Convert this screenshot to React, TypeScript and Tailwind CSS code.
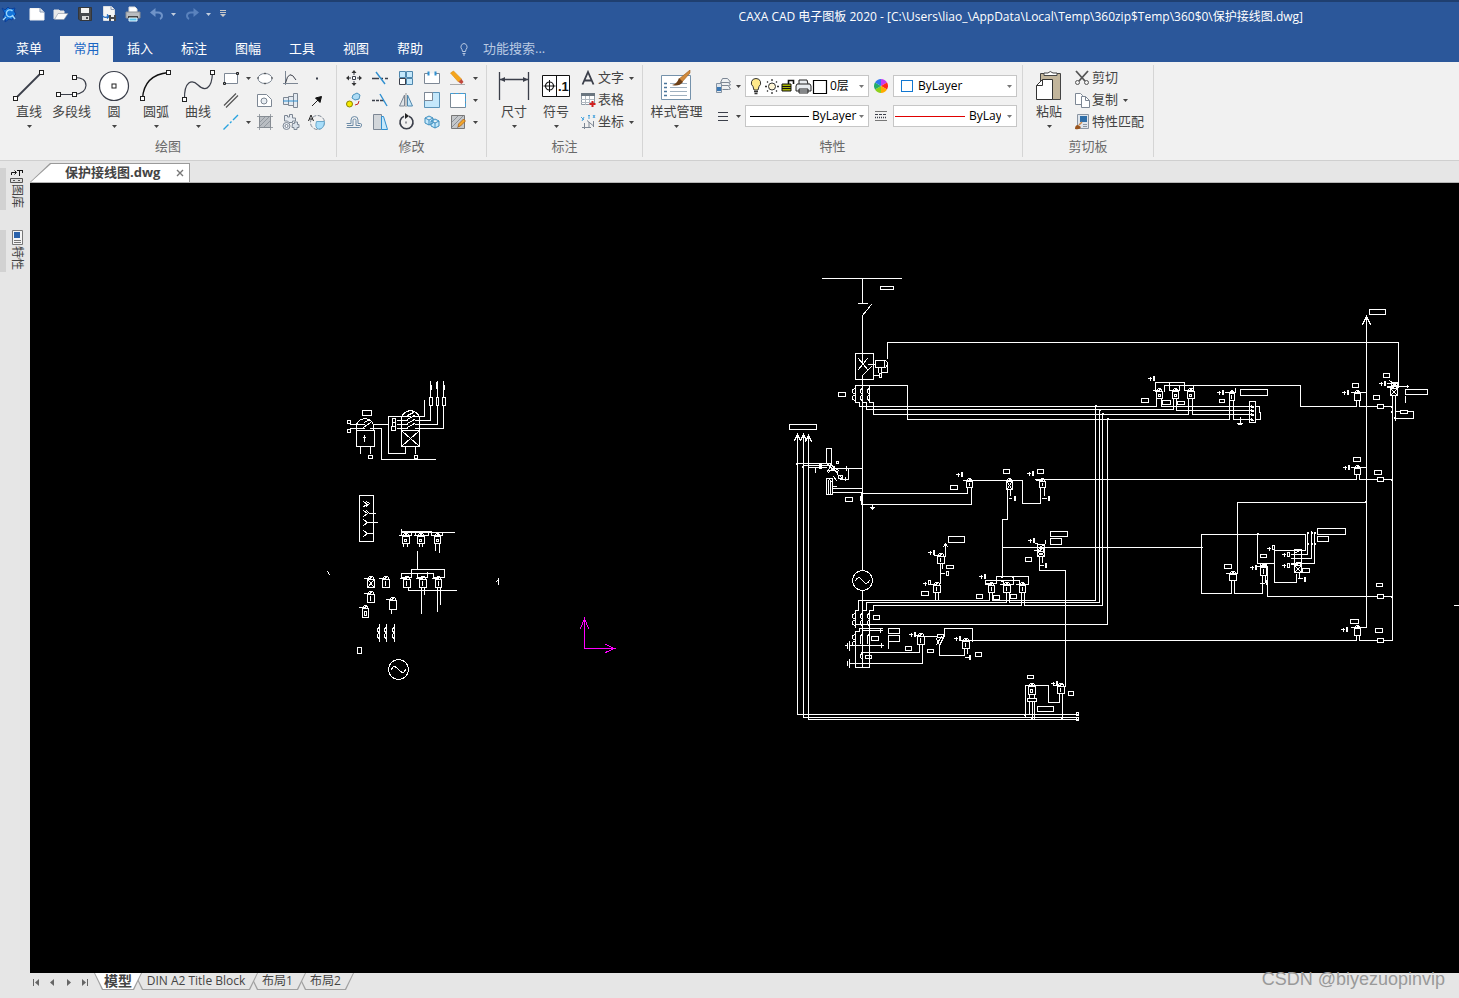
import React from "react";

const INK = "#3b3f4a";
const GREY = "#7d8794";
const SKY = "#2f8fd0";
const PALE = "#c5e8fb";

type DrawProps = { w?: number; h?: number; children: React.ReactNode };

function Draw({ w = 18, h = 18, children }: DrawProps) {
  return (
    <svg width={w} height={h} viewBox={`0 0 ${w} ${h}`} fill="none" stroke={INK} strokeWidth="1" className="block shrink-0" aria-hidden="true">
      {children}
    </svg>
  );
}

function Caret({ color = "#444444" }: { color?: string }) {
  return (
    <svg width="5" height="3" viewBox="0 0 5 3" className="block shrink-0" aria-hidden="true">
      <path d="M0 0h5L2.5 3z" fill={color} />
    </svg>
  );
}

/* ---------- quick access bar ---------- */

function QuickAccess() {
  return (
    <div className="flex h-[24px] items-center">
      <button aria-label="CAXA">
        <Draw w={18} h={18}>
          <path d="M2 3l3 2 3-3 2 2 5-1-1 3 2 3-2 2-2 4-3-1-4 3 1-4-3-1 2-3z" fill="#1273d8" stroke="#0b3f9a" />
          <path d="M12.500 6a3.500 3.500 0 1 0 .5 4M12 10l3 4M3 15l3-3" stroke="#9bd8ff" strokeWidth="1.300" />
        </Draw>
      </button>
      <button aria-label="新建" className="ml-[11px]">
        <Draw w={16} h={14}>
          <path d="M1 1.500h10l4 4V13H1z" fill="#fff" stroke="#f3f3f3" />
          <path d="M11 1v4h4" stroke="#8e9db5" fill="#dfe5ee" />
        </Draw>
      </button>
      <button aria-label="打开" className="ml-[8px]">
        <Draw w={16} h={14}>
          <path d="M1 12V3h5l1 1h4v3" fill="#e8e8e8" stroke="#e8e8e8" />
          <path d="M1.500 12.500L5 6.500h10l-4 6z" fill="#fafafa" stroke="#8a93a3" strokeWidth=".6" />
        </Draw>
      </button>
      <button aria-label="保存" className="ml-[9px]">
        <Draw w={14} h={14}>
          <path d="M.5.5h13v13H2l-1.500-1.500z" fill="#46484c" stroke="#33363b" />
          <path d="M3 1h8v5H3z" fill="#f2f2f2" stroke="none" />
          <path d="M4 9h7v4H4z" fill="#d8d8d8" stroke="none" />
          <path d="M8 10h2v2H8z" fill="#46484c" stroke="none" />
        </Draw>
      </button>
      <button aria-label="另存为" className="ml-[9px]">
        <Draw w={16} h={16}>
          <path d="M2.500.5h8l3 3v11h-11z" fill="#f5f5f5" stroke="#d9dde3" />
          <path d="M10 .5v3h3.500" stroke="#8e9db5" />
          <path d="M1 9.500q2 3 6 1M6 8.500l2 2-2 2" stroke="#1b66bd" strokeWidth="1.300" />
          <path d="M8 9h7v6H8z" fill="#46484c" stroke="none" />
          <path d="M10 9h3v2h-3zM10 13h3v2h-3z" fill="#eee" stroke="none" />
        </Draw>
      </button>
      <button aria-label="打印" className="ml-[8px]">
        <Draw w={16} h={16}>
          <path d="M4 1h6l2 2v4H4z" fill="#fff" stroke="#e0e0e0" />
          <path d="M1 6h14v6H1z" fill="#b9bcc0" stroke="#8b8f94" />
          <path d="M3 10h10v2H3z" fill="#444" stroke="none" />
          <path d="M4 12h8v3H4z" fill="#58c4ee" stroke="#e9f6fc" />
        </Draw>
      </button>
      <button aria-label="撤销" className="ml-[9px]">
        <Draw w={14} h={12}>
          <path d="M2 4.500h6q4 0 4 3.500 0 2-2 3" stroke="#6f93c8" strokeWidth="2" />
          <path d="M5.500 0v9L0 4.500z" fill="#6f93c8" stroke="none" />
        </Draw>
      </button>
      <span className="ml-[7px]"><Caret color="#c3cede" /></span>
      <button aria-label="恢复" className="ml-[9px]">
        <Draw w={14} h={12}>
          <path d="M12 4.500H6Q2 4.500 2 8q0 2 2 3" stroke="#5a82bd" strokeWidth="2" />
          <path d="M8.500 0v9L14 4.500z" fill="#5a82bd" stroke="none" />
        </Draw>
      </button>
      <span className="ml-[7px]"><Caret color="#c3cede" /></span>
      <button aria-label="自定义快速访问" className="ml-[9px]">
        <Draw w={6} h={8}>
          <path d="M0 .5h6M0 2.500h6" stroke="#c9c9c9" />
          <path d="M0 4h6L3 7z" fill="#c9c9c9" stroke="none" />
        </Draw>
      </button>
    </div>
  );
}

/* ---------- ribbon pieces ---------- */

function Group({ label, className, children }: { label: string; className: string; children: React.ReactNode }) {
  return (
    <section aria-label={label} className={`flex shrink-0 flex-col border-r border-[#d5d5d5] ${className}`}>
      <div className="flex h-[71px] items-start">{children}</div>
      <div className="text-center text-[13px] leading-[20px] text-[#6a6a6a]">{label}</div>
    </section>
  );
}

function BigTool({ label, caret = true, className = "w-[42px]", children }: { label: string; caret?: boolean; className?: string; children: React.ReactNode }) {
  return (
    <button className={`flex shrink-0 flex-col items-center pt-[5px] ${className}`}>
      <span className="flex h-[31px] items-center">{children}</span>
      <span className="text-[13px] leading-[20px] whitespace-nowrap">{label}</span>
      {caret && <span className="mt-[4px]"><Caret /></span>}
    </button>
  );
}

function Mini({ name, children }: { name: string; children: React.ReactNode }) {
  return (
    <button aria-label={name} className="flex h-[22px] w-[26px] items-center justify-center">
      <Draw>{children}</Draw>
    </button>
  );
}

function MiniCaret({ name }: { name: string }) {
  return (
    <button aria-label={name} className="flex h-[22px] w-[8px] items-center justify-center">
      <Caret />
    </button>
  );
}

function TextTool({ label, caret, children }: { label: string; caret?: boolean; children: React.ReactNode }) {
  return (
    <button className="flex h-[22px] items-center gap-[2px] text-[13px]">
      <Draw w={16} h={16}>{children}</Draw>
      <span className="whitespace-nowrap">{label}</span>
      {caret && <span className="ml-[3px]"><Caret /></span>}
    </button>
  );
}

function Node({ x, y }: { x: number; y: number }) {
  return <rect x={x - 2} y={y - 2} width="4" height="4" fill="#fff" stroke="#222" />;
}

function DrawGroup() {
  return (
    <Group label="绘图" className="w-[337px]">
      <div className="flex pl-[8px]">
        <BigTool label="直线">
          <Draw w={32} h={32}><path d="M2.500 28.500l26-26" strokeWidth="1.800" /><Node x={2.5} y={28.5} /><Node x={28.5} y={2.5} /></Draw>
        </BigTool>
        <BigTool label="多段线" caret={false} className="w-[43px]">
          <Draw w={32} h={32}><path d="M2.500 24.500h16q11-1 11.500-9Q30 7.500 18.500 7.500" strokeWidth="1.200" /><Node x={2.5} y={24.5} /><Node x={18.5} y={24.5} /><Node x={18.5} y={7.5} /></Draw>
        </BigTool>
        <BigTool label="圆">
          <Draw w={32} h={32}><circle cx="16" cy="16" r="14.500" fill="#fff" strokeWidth="1.200" /><Node x={16} y={16} /></Draw>
        </BigTool>
        <BigTool label="圆弧">
          <Draw w={32} h={32}><path d="M2.500 28.500Q4 5 28.500 2.500" strokeWidth="1.300" stroke="#111" /><Node x={2.5} y={28.5} /><Node x={28.5} y={2.5} /></Draw>
        </BigTool>
        <BigTool label="曲线">
          <Draw w={34} h={32}><path d="M3.500 29.500C3 11 11 9 17 15s14 6 14.500-13" strokeWidth="1.200" /><Node x={3.5} y={29.5} /><Node x={31.5} y={2.5} /></Draw>
        </BigTool>
      </div>
      <div className="-ml-px grid grid-cols-[26px_8px_26px_26px_26px] pt-[2px]">
        <Mini name="矩形"><path d="M2.500 4.500h13v10h-13z" fill="#fff" stroke={GREY} /><path d="M1.500 13.500h2v2h-2zM14.500 3.500h2v2h-2z" stroke="#222" /></Mini>
        <MiniCaret name="矩形选项" />
        <Mini name="椭圆"><ellipse cx="9" cy="9.500" rx="7" ry="5" fill="#fff" stroke={GREY} /><path d="M1.500 9h1M8.500 4.500h1M15.500 9h1M8.500 14.500h1" stroke="#222" strokeWidth="1.500" /></Mini>
        <Mini name="函数曲线"><path d="M3.500 2v14M1 14.500h15" stroke={GREY} /><path d="M3.500 14Q7-1 14 11" /></Mini>
        <Mini name="点"><path d="M8 9.500h2" strokeWidth="2" /></Mini>

        <Mini name="平行线"><path d="M2 14.500L14 2.500M4 16.500L16 4.500" stroke="#555" strokeWidth="1.200" /></Mini>
        <span />
        <Mini name="轮廓"><path d="M1.500 3.500h9l5 5v7h-14z" fill="#fff" stroke={GREY} /><circle cx="8" cy="10" r="3" fill="#e9eef3" stroke={GREY} /></Mini>
        <Mini name="轴"><path d="M1.500 6.500h5v7h-5zM6.500 5.500h5v9h-5zM11.500 2.500h4v14h-4z" fill="#e3eaf1" stroke={GREY} /><path d="M1 10h15" stroke={SKY} /></Mini>
        <Mini name="箭头"><path d="M4 15l7-7" stroke="#222" /><path d="M13.500 5.500l-1.500 6-4.500-4.500z" fill="#111" stroke="#111" /></Mini>

        <Mini name="中心线"><path d="M1.500 16.500l5-5M8 10l1.500-1.500M11 7l5-5" stroke="#27a3e0" strokeWidth="1.400" /></Mini>
        <MiniCaret name="中心线选项" />
        <Mini name="填充"><path d="M3.500 3.500h11v11h-11z" fill="#b9bdc2" stroke="#80858b" /><path d="M1 3.500h16M1 14.500h16M3.500 1v16M14.500 1v16M4 9l5-5M4 13l9-9M8 14l6-6" stroke="#888e96" strokeWidth=".8" /></Mini>
        <Mini name="齿轮">
          <path d="M2.500 2.500h3v1.500h2V1.500h3V5h3v3h-3v1.500H7L5.500 8h-3z" fill="#e6ebf1" stroke={GREY} />
          <path d="M10.500 10.500h2V9h3v2.500h1.500v3h-2v2h-3v-2h-2z" fill="#dbe2ea" stroke={GREY} />
          <circle cx="4.500" cy="13" r="3.500" fill="#e6ebf1" stroke={GREY} />
          <circle cx="4.500" cy="13" r="1.500" fill="#fff" stroke={GREY} />
        </Mini>
        <Mini name="局部放大"><circle cx="9.500" cy="9.500" r="7" stroke={GREY} strokeDasharray="4 1.500" /><path d="M8.500 8.500h8q-.5 8-6 7.500-4-1-2-7.500z" fill="#a9defa" stroke="#6aa8cc" /><path d="M.5 8L3 2l2.500 6M1.500 6h3" stroke="#222" /></Mini>
      </div>
    </Group>
  );
}

function ModifyGroup() {
  return (
    <Group label="修改" className="w-[150px]">
      <div className="grid grid-cols-[26px_26px_26px_26px_26px_8px] pt-[2px] pl-[4px]">
        <Mini name="平移"><path d="M9 1l2.500 3h-5zM9 17l2.500-3h-5zM1 9l3-2.500v5zM17 9l-3-2.500v5z" fill="#333" stroke="none" /><path d="M7.500 7.500h3v3h-3z" fill="#fff" /><path d="M9 4v2M9 12v2M4 9h2M12 9h2" /></Mini>
        <Mini name="裁剪"><path d="M1 9.500h7M10 9.500h2M14 9.500h3" strokeWidth="1.300" /><path d="M5 3l9 12" stroke={SKY} strokeWidth="1.400" /></Mini>
        <Mini name="阵列"><path d="M2.500 2.500h6v6h-6zM9.500 2.500h6v6h-6zM9.500 9.500h6v6h-6z" fill={PALE} stroke="#4f87ad" /><path d="M2.500 9.500h6v6h-6z" fill="#fff" /></Mini>
        <Mini name="打断"><path d="M5 4.500H1.500v10h15v-10H13" fill="#fff" stroke={GREY} /><path d="M5.500 2.500v4M12.500 2.500v4" stroke={SKY} strokeWidth="2" /></Mini>
        <Mini name="删除"><path d="M1.500 4l3-2 8 8-3 3z" fill="#f5a51b" stroke="#d98a10" strokeWidth=".6" /><path d="M9.500 13l3-3 2 3-2 2z" fill="#c0473b" stroke="none" /><path d="M1 15.500h15" stroke="#aaa" /></Mini>
        <MiniCaret name="删除选项" />

        <Mini name="平移复制"><circle cx="4.500" cy="13" r="3" fill="#f6ea00" stroke="#8b8500" /><path d="M8 4l4-2 3 2-1 4-4 1-3-2z" fill="#aedcf5" stroke="#4b93bd" /><path d="M10 14q4 0 4-4" stroke="#c62828" /></Mini>
        <Mini name="延伸"><path d="M1 9.500h3M5 9.500h3M9 9.500h4" strokeWidth="1.300" /><path d="M9 3l7 12" stroke={SKY} strokeWidth="1.400" /></Mini>
        <Mini name="镜像"><path d="M7.500 4v11h-5z" fill="#e0e5e9" stroke={GREY} /><path d="M10.500 4v11h5z" fill={PALE} stroke="#4f87ad" /><path d="M9 2v14" stroke="#999" /></Mini>
        <Mini name="缩放"><path d="M1.500 1.500h15v15h-15z" fill={PALE} stroke="#5b93b8" /><path d="M1.500 1.500h8v8h-8z" fill="#fff" stroke={GREY} /></Mini>
        <Mini name="边框"><path d="M1.500 2.500h15v14h-15z" fill="#fff" stroke="#7b8894" /><path d="M1.500 2.500h15v14" stroke="#38a4e4" strokeDasharray="3 2" /></Mini>
        <MiniCaret name="边框选项" />

        <Mini name="等距线"><path d="M1.500 10.500H6V7a3.500 3.500 0 0 1 7 0v3.500h2.500q1 0 1 1.500 0 2.500-2 2.500H1.500M2 12.500h6V7.500a1.500 1.500 0 0 1 3 0v5h4" stroke="#6c8ba6" /></Mini>
        <Mini name="拉伸"><path d="M2.500 1.500h8v15h-8z" fill="#d2d6da" stroke={GREY} /><path d="M10.500 3.500h2l4 13h-6z" fill={PALE} stroke={SKY} /></Mini>
        <Mini name="旋转"><path d="M7 3.200A6.500 6.500 0 1 0 12 3.200" strokeWidth="1.600" /><path d="M8 0v6l4-3z" fill="#222" stroke="none" /><path d="M8.500 9.500h1" strokeWidth="2" /></Mini>
        <Mini name="分解"><path d="M2 5l4-2 4 2v5l-4 2-4-2zM8 8l4-2 4 2v5l-4 2-4-2zM2 5l4 2 4-2M6 7v5M8 8l4 2 4-2M12 10v5" fill={PALE} stroke="#3e8fc0" /></Mini>
        <Mini name="编辑填充"><path d="M2.500 2.500h13v13h-13z" fill="#c4c7ca" stroke="#777" /><path d="M3 9l6-6M3 14L14 3M8 15l7-7" stroke="#8b9097" /><path d="M9.500 11l5-5 2 2-5 5-2.500 1z" fill="#f2a72b" stroke="#a55a15" strokeWidth=".7" /></Mini>
        <MiniCaret name="填充选项" />
      </div>
    </Group>
  );
}

function AnnotateGroup() {
  return (
    <Group label="标注" className="w-[156px]">
      <div className="flex pl-[6px]">
        <BigTool label="尺寸">
          <Draw w={32} h={32}><path d="M1.500 2v28M30.500 2v28M2 9.500h28" strokeWidth="1.300" /><path d="M2 9.500l5-2.500v5zM30 9.500l-5-2.500v5z" fill={INK} stroke="none" /></Draw>
        </BigTool>
        <BigTool label="符号">
          <svg width="28" height="22" viewBox="0 0 28 22" className="block" aria-hidden="true">
            <path d="M.5.5h27v21H.5zM14.500.5v21" fill="#fff" stroke="#111" />
            <circle cx="7.500" cy="11" r="4" fill="none" stroke="#111" strokeWidth="1.200" />
            <path d="M1.500 11h12M7.500 5v12" stroke="#111" />
            <text x="16" y="16" fontSize="13" fontWeight="700" fontFamily="Liberation Sans, sans-serif" fill="#111">.1</text>
          </svg>
        </BigTool>
      </div>
      <div className="flex flex-col pt-[2px] pl-[3px]">
        <TextTool label="文字" caret><path d="M2.500 14.500L8 2l5.500 12.500M4.500 10.500h7" strokeWidth="1.800" /></TextTool>
        <TextTool label="表格"><path d="M1.500 1.500h13v11h-13z" fill="#fff" stroke="#8f9aa5" /><path d="M1 1h14v3H1z" fill="#6b7680" stroke="none" /><path d="M1 7.500h13M1 10.500h13M5.500 4v9M9.500 4v9" stroke="#b2bac2" /><path d="M12.500 9v6M9.500 12h6" stroke="#d02020" strokeWidth="2" /></TextTool>
        <TextTool label="坐标" caret><path d="M4.500 9v6M2 13.500h9M9 8v6M7 6.500l6 5M13.500 7v6" stroke={GREY} /><path d="M1 3l3 3M4 3l-2 4M8 1.500h2M9 2v3M13 1l2 3M15 1l-2 3" stroke="#48a3dd" /></TextTool>
      </div>
    </Group>
  );
}

function Combo({ name, value, lead, textClass }: { name: string; value: string; lead: React.ReactNode; textClass: string }) {
  return (
    <div className="flex h-[22px] w-[124px] items-center border border-[#c6c6c6] bg-white pr-[4px]">
      {lead}
      <select aria-label={name} className={`min-w-0 flex-1 appearance-none overflow-hidden bg-transparent text-[12px] leading-[18px] text-black outline-none ${textClass}`}>
        <option>{value}</option>
      </select>
      <Caret color="#777777" />
    </div>
  );
}

function PropertyGroup() {
  return (
    <Group label="特性" className="w-[380px]">
      <BigTool label="样式管理" className="w-[67px]">
        <Draw w={34} h={32}>
          <path d="M1.500 5.500h29v24h-29z" fill="#fff" stroke="#7592ab" />
          <path d="M4 13.500h3M4 17.500h3M4 21.500h3M4 25.500h3" stroke="#49759b" strokeWidth="1.400" />
          <path d="M10 13.500h17M10 17.500h17M10 21.500h17M10 25.500h17" stroke="#9fb0bf" />
          <path d="M30 0L19 9l3 3 8-9z" fill="#d18a3c" stroke="#9a5c1e" strokeWidth=".6" />
          <path d="M19 8l4 4q-4 5-11 3 5-1 7-7z" fill="#6d3f16" stroke="none" />
        </Draw>
      </BigTool>
      <div className="flex flex-col gap-[8px] pt-[10px]">
        <div className="flex items-center">
          <button aria-label="图层" className="flex w-[21px] justify-end">
            <Draw w={16} h={18}>
              <path d="M5.500 5.500l2-4h5l3 3.500-2 .5zM6.500 8.500h7l2-.5-2-2.500M7.500 12.500h6l2-.5-2-3" fill="#eef1f4" stroke={GREY} />
              <path d="M1.500 6.500h5v9h-5z" fill="#dfe6ed" stroke="#8492a2" />
              <path d="M2 10h4v4H2z" fill="#3a78b5" stroke="none" />
            </Draw>
          </button>
          <span className="mr-[4px] ml-[5px]"><Caret /></span>
          <Combo
            name="图层"
            value="0层"
            textClass="pl-[2px]"
            lead={
              <span className="flex items-center pl-[3px]">
                <Draw w={14} h={18}><path d="M7 1.500a4.500 4.500 0 0 0-3 8L5 13h4l1-3.500a4.500 4.500 0 0 0-3-8z" fill="#ffe98a" stroke="#333" /><path d="M5 14.500h4M5.500 16.500h3" stroke="#333" strokeWidth="1.500" /></Draw>
                <Draw w={18} h={18}><circle cx="9" cy="9.500" r="3.500" fill="#fff6d5" stroke="#333" /><path d="M9 2v2M9 15v2M2 9.500h2M14 9.500h2M4 4.500l1 1M14 4.500l-1 1M4 14.500l1-1M14 14.500l-1-1" stroke="#333" strokeWidth="1.300" /></Draw>
                <Draw w={14} h={18}><path d="M7.500 8V3.500h5V7" stroke="#111" strokeWidth="1.600" /><path d="M1 7h9v7H1z" fill="#a8b400" stroke="#111" /><path d="M1 9.500h9M1 11.500h9" stroke="#111" /></Draw>
                <Draw w={17} h={18}><path d="M4 7V3h8l1 4M2 7h13l1 2v5H1V9zM4 12h9v4H4z" fill="#e9edf1" stroke="#222" /></Draw>
                <Draw w={16} h={18}><path d="M1.500 3.500h13v13h-13z" fill="#fff" stroke="#000" strokeWidth="1.200" /></Draw>
              </span>
            }
          />
          <button aria-label="颜色" className="mx-[5px]">
            <Draw w={14} h={14}>
              <g stroke="none">
                <path d="M7 7V0a7 7 0 0 1 6 3.500z" fill="#c63cf0" />
                <path d="M7 7l6-3.500a7 7 0 0 1 0 7z" fill="#ff2a1c" />
                <path d="M7 7l6 3.500A7 7 0 0 1 7 14z" fill="#ffab00" />
                <path d="M7 7v7a7 7 0 0 1-6-3.500z" fill="#8ed01c" />
                <path d="M7 7l-6 3.500a7 7 0 0 1 0-7z" fill="#23ad6a" />
                <path d="M7 7L1 3.500A7 7 0 0 1 7 0z" fill="#3079ef" />
              </g>
            </Draw>
          </button>
          <Combo
            name="颜色"
            value="ByLayer"
            textClass="pl-[5px]"
            lead={<span className="ml-[7px] block h-[12px] w-[12px] border border-[#1177d1] bg-white" />}
          />
        </div>
        <div className="flex items-center">
          <button aria-label="线宽样式" className="flex w-[21px] justify-end">
            <Draw w={16} h={12}><path d="M3 2.500h10M3 6.500h10M3 10.500h10" strokeWidth="1.200" /></Draw>
          </button>
          <span className="mr-[4px] ml-[5px]"><Caret /></span>
          <Combo name="线型" value="ByLayer" textClass="pl-[3px]" lead={<span className="ml-[4px] block h-px w-[59px] shrink-0 bg-black" />} />
          <button aria-label="线型样式" className="mx-[5px]">
            <Draw w={14} h={12}><path d="M1 1.500h12M1 10.500h12" stroke="#777" /><path d="M1 4.500h12" strokeDasharray="3 1" /><path d="M1 7.500h12" strokeDasharray="1 1" strokeWidth="1.500" /></Draw>
          </button>
          <Combo name="线宽" value="ByLayer" textClass="mr-[6px] pl-[4px]" lead={<span className="ml-px block h-px w-[70px] shrink-0 bg-[#e00000]" />} />
        </div>
      </div>
    </Group>
  );
}

function ClipboardGroup() {
  return (
    <Group label="剪切板" className="w-[131px]">
      <BigTool label="粘贴" className="w-[52px]">
        <Draw w={28} h={32}>
          <path d="M5.500 3.500h20v26h-20z" fill="#c2b59b" stroke="#444" />
          <path d="M9 5.500V3h4q2-3 5 0h4v2.500z" fill="#fff" stroke="#444" />
          <path d="M7.500 9.500h10v20h-16v-14z" fill="#fff" stroke="#333" />
          <path d="M7.500 9.500v6h-6" stroke="#333" />
        </Draw>
      </BigTool>
      <div className="-ml-px flex flex-col pt-[2px]">
        <TextTool label="剪切"><path d="M2 1l9 10M14 1L5 11" stroke="#555" strokeWidth="1.800" /><circle cx="3.500" cy="12.500" r="2" stroke="#555" /><circle cx="12.500" cy="12.500" r="2" stroke="#555" /></TextTool>
        <TextTool label="复制" caret><path d="M1.500 1.500h5l2 2v9h-7z" fill="#fff" stroke={GREY} /><path d="M7.500 4.500h4l4 4v7h-8z" fill="#fff" stroke={GREY} /><path d="M11.500 4.500v4h4" stroke={GREY} /></TextTool>
        <TextTool label="特性匹配"><path d="M3.500.5h11v14h-11z" fill="#dfe5ec" stroke="#8a95a2" /><path d="M6 2h7v6H6z" fill="#2f6ea8" stroke="none" /><path d="M9 10.500h4M9 12.500h4" stroke="#8a95a2" /><path d="M1 15q0-4 3-4l3 2q-1 3-6 2z" fill="#9a541c" stroke="none" /><path d="M5 11l3-3" stroke="#c98a4d" strokeWidth="1.500" /></TextTool>
      </div>
    </Group>
  );
}

/* ---------- schematic ---------- */

type Pt = [number, number];
type Box = [number, number, number, number];
type Core = "bar" | "x" | "box" | "none";

const leftWires = [
  "M350 424H364M373 424H388M350 428H364M370 428H381V459H435",
  "M360 447V453M370 447V453M415 447V453",
  "M410 416H388V453H405V447",
  "M397 420H407M397 424H407M397 428H407",
  "M413 416H424V400M415 420H430V381M415 424H437V381M415 428H443V381",
  "M431 385V389M436 382V388M444 385V389",
  "M364 422L369 419M363 427L370 422M407 415L413 412M407 419L414 415M407 423L414 419M407 427L414 423",
  "M356 430V424Q358 419 364 418Q371 419 373 424V430",
  "M401 430V417Q403 411 410 410Q417 411 419 417V430",
  "M402 431L418 445M418 431L402 445",
  "M364 435V441M363 437H365",
  "M363 501L367 504L363 506M366 501L369 503L366 506",
  "M363 510L367 513L363 516M366 510L369 513H375M363 519L367 522L363 525M366 522H377M363 530L367 533L363 536M366 533H373",
  "M401 529V535M401 531H431M401 532H454M431 532V535H442V532M415 532V535H428V532M401 535H411V532",
  "M403 544V546M407 544V546M419 544V546M422 544V546M435 544V550M439 544V552",
  "M417 551V569M411 577V569H444V577H435M411 577H401V573H433V577H436M417 573V577H427V572",
  "M408 588V590H456M421 588V613M424 588V594M437 588V611M440 588V604",
  "M391 610V613",
  "M379 624V641M386 624V641M394 624V641",
  "M379 627L377 628V631L379 632L377 634V637L379 638M386 627L384 628V631L386 632L384 634V637L386 638M394 627L392 628V631L394 632L392 634V637L394 638",
  "M327 571L329 574M498 578V584M497 580L496 581",
  "M391 669Q393 663 398 669T405 669",
];

const rightWires = [
  "M822 278H901M862 278V303M858 303H867M871 304L862 315V363M858 358L867 369M867 358L858 369M871 366L862 375V570",
  "M868 364H875M887 358V342H1398V386M885 360Q889 363 885 367M887 366V372H882M878 368V372M881 368V372M874 375H878",
  "M907 385H855V402H859V406H1156V399M869 385V402H873V414H1188V399M862 402H866V409H1173V399M907 385V419H1229V401",
  "M855 388L852 389V392L855 394L852 396V399L855 400M862 388L860 389V392L862 394L860 396V399L862 400M869 388L867 389V392L869 394L867 396V399L869 400",
  "M797 434V714H1077M803 434V717H1077M808 434V719H1077",
  "M794 440L797 434L800 440M800 440L803 434L806 440M805 441L808 435L811 441",
  "M797 463H831M803 465H828M808 467H826M828 465L836 472M830 464L838 470M828 472L834 466M834 468H862M848 468V479H840M846 466V470M815 467V472M819 464V468M820 464V468M821 464V468M829 470H834M837 471V474",
  "M828 480V494M830 480V494M832 488H862M832 492H862M832 486H836M828 478L832 482M833 476L836 480M840 476L842 479",
  "M826 463L836 471M827 471L831 464M845 480V477",
  "M967 488V493H861V504H971V488M872 504V509M870 507H874M871 508H873M861 495L860 496V500",
  "M963 480H1022V503H1040V488M1007 490V519H1002V577M1010 490V495M1009 498H1011M1035 479H1356V474M1044 488V495M1042 498H1046",
  "M1095 406V600H992V592M989 592V600H858V610H855V627M1099 409V602H1009V592M1006 592V602H866V610H862M1102 414V605H1024V592M1021 592V605H873V610H869V631M1107 419V624H855",
  "M1155 391V382H1184V390H1193V385M1164 391V385H1300V406H1356V401M1169 382V390H1179V385M1161 399V406H1253M1176 399V410H1253M1192 399V414H1253M1233 401V419H1252",
  "M1255 406H1259V412H1260V419H1255M1251 405V407H1253M1251 409V411H1253M1251 413V415H1253M1251 418V420H1253",
  "M1240 417V424M1237 423H1242M1238 424H1241M1235 388V392H1225",
  "M1366 316V627H1351M1362 324L1366 316L1370 324M1351 392H1366M1351 467H1366",
  "M1359 401V406H1392M1359 475V479H1392M1392 396V640M1395 396V420M1387 386H1408M1405 396V402M1407 385V387",
  "M1387 383H1398M1389 380L1398 387",
  "M1366 502H1237V573H1226M1231 581V593H1201V534H1305V550H1274M1234 581V593H1262V576",
  "M1257 534V563H1274M1274 549V582H1296V574M1291 554H1307V532M1291 558H1311V531M1291 563H1314V532",
  "M1267 566V596H1392M1265 576V582M1260 583H1264M1257 566H1267M1299 573V577M1298 578H1302",
  "M1356 636V640H960M1359 636V640H1392M1454 605H1459",
  "M1002 547H1202M1037 543H1035M1045 543V540M1039 557V570H1065V686M1042 557V562M1040 565H1043",
  "M945 556V544M943 546L945 543L947 546M944 545H946M940 564V583M942 564V568M940 573H944M935 593V600M938 593V600",
  "M996 583V576H1028V584H1019V580H985V583H996M1003 580V584H1013V576",
  "M862 590V667M855 613L852 614V617L855 619L852 621V624L855 625M862 613L860 614V617L862 619L860 621V624L862 625M869 613L867 614V617L869 619L867 621V624L869 625",
  "M855 667V631H859V628H882M855 667H869V631M862 630H882M880 629V632M849 645H883M881 643V647M849 641V650M847 643V648M849 659V667M847 661V665M845 645H846",
  "M855 634L852 635V638L855 640L852 642V645M862 634L860 635V643M869 634L867 635V643M862 653L860 654V657L862 659",
  "M919 645V652H861M922 645V663H849M888 641V648",
  "M924 636H936M936 638L939 645L943 637M937 634H943V637H937ZM936 644L941 636M944 636V628H972V641M939 645V655H964V649M967 649V653M965 657H968",
  "M1025 716V685H1048V702H1059V694M1029 695V697M1034 695V697M1029 702V714M1032 702V717M1034 702V719M1062 694V719M1057 686L1062 684",
];

const leftBoxes: Box[] = [
  [362, 410, 371, 415], [347, 420, 350, 423], [347, 429, 350, 432], [356, 430, 374, 446], [401, 430, 419, 446],
  [368, 455, 372, 458], [414, 455, 417, 458], [392, 418, 395, 422], [392, 422, 395, 426], [391, 426, 395, 430],
  [359, 495, 373, 541], [357, 647, 361, 653],
];

const rightBoxes: Box[] = [
  [855, 353, 873, 379], [880, 286, 893, 289], [875, 360, 884, 367], [879, 373, 881, 377], [838, 392, 845, 396],
  [789, 424, 816, 429], [826, 448, 831, 463], [826, 478, 832, 494], [838, 475, 842, 478], [836, 461, 838, 463], [845, 497, 852, 501],
  [950, 485, 957, 489], [1003, 469, 1009, 473], [1037, 469, 1043, 473], [1050, 531, 1067, 536], [1050, 538, 1061, 544],
  [1025, 557, 1031, 561], [1141, 398, 1148, 402], [1162, 400, 1170, 404], [1177, 401, 1184, 404], [1219, 399, 1224, 402],
  [1240, 389, 1267, 395], [1249, 401, 1255, 422], [1369, 309, 1385, 314], [1373, 395, 1379, 399],
  [1352, 383, 1358, 387], [1383, 373, 1389, 377], [1405, 389, 1427, 394], [1395, 411, 1413, 418], [1353, 457, 1360, 461],
  [1374, 470, 1381, 474], [1224, 564, 1231, 568], [1260, 554, 1266, 557], [1317, 528, 1345, 534],
  [1317, 536, 1328, 541], [1302, 568, 1309, 572], [1272, 545, 1274, 549], [1287, 552, 1289, 556], [1287, 563, 1289, 567],
  [1376, 583, 1382, 586], [1350, 619, 1358, 623], [1375, 628, 1382, 632],
  [948, 536, 964, 542], [946, 565, 953, 568], [946, 571, 948, 575], [928, 580, 930, 584], [921, 591, 928, 595],
  [976, 594, 982, 598], [993, 595, 999, 599], [1010, 594, 1016, 598], [873, 615, 879, 619], [888, 628, 899, 633],
  [888, 635, 899, 641], [871, 636, 878, 640], [865, 655, 871, 658], [905, 646, 911, 650], [927, 649, 933, 652],
  [975, 652, 981, 656], [1027, 675, 1033, 678], [1027, 698, 1036, 701], [1037, 706, 1053, 711], [1068, 691, 1073, 695],
  [1076, 712, 1078, 715], [1076, 717, 1078, 720],
];

/* fuses and resistors hide the wire behind them */
const solidBoxes: Box[] = [
  [429, 397, 432, 405], [436, 397, 438, 405], [442, 397, 445, 405],
  [1400, 410, 1407, 413], [1377, 404, 1383, 408], [1377, 477, 1383, 481], [1377, 594, 1383, 598], [1377, 638, 1383, 642],
];

const relays: [number, number, number, number, Core][] = [
  [402, 536, 7, 7, "box"], [417, 536, 7, 7, "box"], [434, 536, 6, 7, "box"],
  [403, 579, 7, 8, "bar"], [419, 579, 7, 8, "bar"], [435, 579, 6, 8, "bar"],
  [367, 579, 7, 8, "x"], [382, 579, 7, 8, "bar"], [367, 594, 7, 8, "bar"], [389, 600, 7, 9, "none"], [362, 608, 6, 9, "box"],
  [966, 481, 6, 6, "bar"], [1006, 481, 6, 8, "x"], [1039, 481, 6, 6, "bar"],
  [1156, 391, 6, 7, "box"], [1172, 391, 6, 7, "box"], [1187, 391, 7, 7, "box"], [1229, 393, 5, 7, "bar"],
  [1354, 393, 6, 7, "none"], [1390, 388, 7, 7, "x"], [1354, 468, 6, 6, "none"], [1354, 628, 6, 7, "none"],
  [1229, 574, 7, 6, "none"], [1260, 567, 6, 8, "bar"], [1294, 565, 7, 7, "x"],
  [1037, 551, 7, 5, "x"], [937, 556, 7, 7, "bar"], [933, 585, 7, 7, "bar"],
  [988, 585, 6, 7, "bar"], [1003, 585, 7, 7, "bar"], [1019, 585, 6, 7, "bar"],
  [917, 636, 7, 8, "bar"], [962, 641, 7, 7, "bar"], [1028, 686, 7, 8, "box"], [1057, 686, 7, 7, "bar"],
];

const tallCaps: Box[] = [
  [1037, 544, 1044, 551], [1260, 563, 1266, 567], [1294, 549, 1301, 565], [1391, 382, 1397, 388],
];

const plusMarks: Pt[] = [
  [956, 474], [1027, 473], [1028, 540], [1148, 378], [1217, 392], [1342, 392], [1343, 467], [1379, 383],
  [1250, 567], [1341, 629], [928, 552], [979, 576], [909, 634], [954, 638], [1051, 683],
];

const plainPlus: Pt[] = [[1267, 548], [1282, 554], [1282, 565], [923, 583]];

const bars: Pt[] = [[1014, 498], [1048, 498], [1045, 565], [1304, 579], [969, 657], [1266, 582]];

const dots: Pt[] = [
  [1096, 405], [1100, 409], [1103, 413], [1108, 418], [1366, 501], [1258, 533], [1392, 406], [1392, 479], [1392, 596],
  [1392, 411], [1395, 417], [797, 463], [803, 466], [1002, 576], [1013, 576], [1002, 580], [1025, 714], [1032, 717], [1062, 718],
  [1308, 532], [1312, 532], [1315, 532], [1308, 543], [1312, 543], [1315, 543],
];

function Relay({ x, y, w, h, core }: { x: number; y: number; w: number; h: number; core: Core }) {
  const mid = x + Math.floor(w / 2);
  return (
    <g>
      <rect x={x} y={y} width={w} height={h} />
      <path d={`M${x + 1} ${y}V${y - 2}M${x + 2} ${y - 3}H${x + w - 2}M${x + w - 1} ${y - 2}V${y}M${x - 3} ${y - 1}H${mid}M${mid - 1} ${y - 1}L${mid + 1} ${y - 2}`} />
      {core === "bar" && <path d={`M${mid} ${y + 2}V${y + h - 2}`} />}
      {core === "x" && <path d={`M${x + 1} ${y + 1}L${x + w - 1} ${y + h - 1}M${x + w - 1} ${y + 1}L${x + 1} ${y + h - 1}`} />}
      {core === "box" && <rect x={mid - 1} y={y + 3} width="2" height={h - 5} />}
    </g>
  );
}

function Boxes({ items, fill = "none" }: { items: Box[]; fill?: string }) {
  return (
    <>
      {items.map(([a, b, c, d]) => (
        <rect key={`${a}-${b}`} x={a} y={b} width={c - a} height={d - b} fill={fill} />
      ))}
    </>
  );
}

function Schematic() {
  return (
    <svg viewBox="30 183 1429 790" className="block h-full w-full" shapeRendering="crispEdges" role="img" aria-label="保护接线图">
      <g transform="translate(.5 .5)" fill="none" stroke="#ffffff" strokeWidth="1" strokeLinecap="square">
        <path d={leftWires.join("")} />
        <path d={rightWires.join("")} />
        <Boxes items={leftBoxes} />
        <Boxes items={rightBoxes} />
        <Boxes items={solidBoxes} fill="#000000" />
        <Boxes items={tallCaps} />
        {tallCaps.map(([a, b, c, d]) => (
          <path key={a} d={`M${a + 1} ${b + 3}L${c - 1} ${b + 1}M${a + 1} ${d - 1}L${c - 1} ${d - 3}`} />
        ))}
        {relays.map(([x, y, w, h, core]) => (
          <Relay key={`${x}-${y}`} x={x} y={y} w={w} h={h} core={core} />
        ))}
        {plusMarks.map(([x, y]) => (
          <path key={`${x}-${y}`} d={`M${x} ${y}H${x + 3}M${x + 2} ${y - 1}V${y + 2}M${x + 5} ${y - 2}V${y + 2}M${x + 6} ${y - 2}V${y + 2}`} />
        ))}
        {plainPlus.map(([x, y]) => (
          <path key={`${x}-${y}`} d={`M${x} ${y}H${x + 3}M${x + 2} ${y - 1}V${y + 2}`} />
        ))}
        {bars.map(([x, y]) => (
          <path key={`${x}-${y}`} d={`M${x} ${y - 2}V${y + 2}M${x + 1} ${y - 2}V${y + 2}`} />
        ))}
        <path d={dots.map(([x, y]) => `M${x - 1} ${y}H${x}M${x - 1} ${y + 1}H${x}`).join("")} />
        <circle cx="398" cy="669" r="10" />
        <circle cx="862" cy="580" r="10" />
        <path d="M855 580Q858 574 862 580T869 580" />
        <path d="M584 648V618M580 628L584 618L588 628M584 648H614M605 644L614 648L605 652" stroke="#ff00ff" />
      </g>
    </svg>
  );
}

/* ---------- page ---------- */

const menuTabs = ["插入", "标注", "图幅", "工具", "视图", "帮助"];

function SheetTab({ label, active, className }: { label: string; active?: boolean; className: string }) {
  return (
    <button className={`relative h-[17px] bg-[#a0a0a0] px-px pb-px [clip-path:polygon(0_0,100%_0,calc(100%-8px)_100%,8px_100%)] ${className}`}>
      <span
        className={`flex h-[16px] items-center justify-center pb-px leading-[16px] whitespace-nowrap [clip-path:polygon(0_0,100%_0,calc(100%-8px)_100%,8px_100%)] ${
          active ? "bg-white text-[14px] font-bold" : "bg-[#e6e6e6] text-[12px]"
        }`}
      >
        {label}
      </span>
    </button>
  );
}

function SideTab({ label, children }: { label: string; children: React.ReactNode }) {
  return (
    <div className="flex h-[42px]">
      <span className="w-[6px] bg-[#d2d2d2]" />
      <button className="ml-[4px] flex w-[13px] flex-col items-center">
        <Draw w={14} h={16}>{children}</Draw>
        <span className="text-[12px] leading-[14px] [text-orientation:sideways] [writing-mode:vertical-rl]">{label}</span>
      </button>
    </div>
  );
}

export default function App() {
  return (
    <div className="flex min-h-screen flex-col overflow-hidden bg-[#e6e6e6] font-['Open_Sans','Noto_Sans_CJK_SC',sans-serif] text-[13px] text-[#444444]">
      <header className="bg-[#2b579a] text-white">
        <div className="flex h-[28px] items-start border-t-2 border-[#1f3f70]">
          <QuickAccess />
          <h1 className="ml-auto truncate pt-[5px] pr-[156px] text-[12px] leading-[19px] font-normal">
            CAXA CAD 电子图板 2020 - [C:\Users\liao_\AppData\Local\Temp\360zip$Temp\360$0\保护接线图.dwg]
          </h1>
        </div>
        <nav className="flex h-[34px] items-end">
          <button className="h-[26px] w-[58px] pb-px">菜单</button>
          <button className="ml-[2px] h-[26px] w-[53px] bg-[#f1f1f1] pb-px text-[#1a66c4]">常用</button>
          {menuTabs.map((t) => (
            <button key={t} className="h-[26px] w-[54px] pb-px">{t}</button>
          ))}
          <label className="ml-[22px] flex h-[26px] items-center gap-[14px] pb-px">
            <Draw w={10} h={14}>
              <path d="M5 1.500a3.500 3.500 0 0 0-2 6l.5 2h3L7 7.500a3.500 3.500 0 0 0-2-6zM3.500 11.500h3M4 13h2" stroke="#b9c9e2" />
            </Draw>
            <input aria-label="功能搜索" placeholder="功能搜索..." className="w-[120px] bg-transparent outline-none placeholder:text-[#b9c9e2]" />
          </label>
        </nav>
      </header>

      <div className="flex h-[99px] border-b border-[#cfcfcf] bg-[#f1f1f1] py-[3px]">
        <DrawGroup />
        <ModifyGroup />
        <AnnotateGroup />
        <PropertyGroup />
        <ClipboardGroup />
      </div>

      <main className="flex flex-1">
        <aside className="flex w-[30px] shrink-0 flex-col gap-[20px] pt-[7px]">
          <SideTab label="图库"><path d="M1.500 7V4.500H6M4.500 2.500l2 2-2 2M9.500 8V2.500M7 2.500h6M12.500 2v3" stroke="#111" /><path d="M.5 10.500h12v4H.5z" fill="#ddd" stroke="#555" /><path d="M3 12.500h2M8 12.500h2" stroke="#555" /></SideTab>
          <SideTab label="特性"><path d="M2.500.5h10v14h-10z" fill="#f5f5f5" stroke="#777" /><path d="M4 2h6v6H4z" fill="#2a62ab" stroke="none" /><path d="M4 10.500h7M4 12.500h7" stroke="#777" /></SideTab>
        </aside>
        <div className="flex min-w-0 flex-1 flex-col">
          <div className="flex h-[22px] items-end border-b border-[#b5b5b5]">
            <div className="h-[19px] w-[160px] bg-[#9a9a9a] px-px pt-px [clip-path:polygon(20px_0,100%_0,100%_100%,0_100%)]">
              <div className="flex h-[18px] items-center bg-white pl-[34px] [clip-path:polygon(20px_0,100%_0,100%_100%,0_100%)]">
                <span className="pb-px text-[13px] leading-[17px] font-bold whitespace-nowrap">保护接线图.dwg</span>
                <button aria-label="关闭" className="mr-[5px] ml-auto">
                  <Draw w={8} h={8}><path d="M1 1l6 6M7 1L1 7" stroke="#777" strokeWidth="1.400" /></Draw>
                </button>
              </div>
            </div>
          </div>
          <div className="min-h-0 flex-1 bg-black">
            <Schematic />
          </div>
          <footer className="relative flex h-[25px] items-start">
            <div className="flex items-center gap-[9px] pt-[6px] pl-[3px]">
              <button aria-label="第一页"><Draw w={7} h={7}><path d="M.5 0v7" stroke="#666" /><path d="M6 0v7L2 3.500z" fill="#666" stroke="none" /></Draw></button>
              <button aria-label="上一页"><Draw w={7} h={7}><path d="M5 0v7L1 3.500z" fill="#666" stroke="none" /></Draw></button>
              <button aria-label="下一页"><Draw w={7} h={7}><path d="M2 0v7l4-3.500z" fill="#666" stroke="none" /></Draw></button>
              <button aria-label="最后一页"><Draw w={7} h={7}><path d="M1 0v7l4-3.500z" fill="#666" stroke="none" /><path d="M6.500 0v7" stroke="#666" /></Draw></button>
            </div>
            <SheetTab label="模型" active className="z-40 ml-[6px] w-[48px]" />
            <SheetTab label="DIN A2 Title Block" className="z-30 -ml-[8px] w-[124px]" />
            <SheetTab label="布局1" className="z-20 -ml-[9px] w-[57px]" />
            <SheetTab label="布局2" className="z-10 -ml-[9px] w-[57px]" />
            <div className="absolute right-[14px] bottom-[9px] font-['Liberation_Sans',sans-serif] text-[18px] leading-[20px] whitespace-nowrap text-[#999999]">
              CSDN @biyezuopinvip
            </div>
          </footer>
        </div>
      </main>
    </div>
  );
}
